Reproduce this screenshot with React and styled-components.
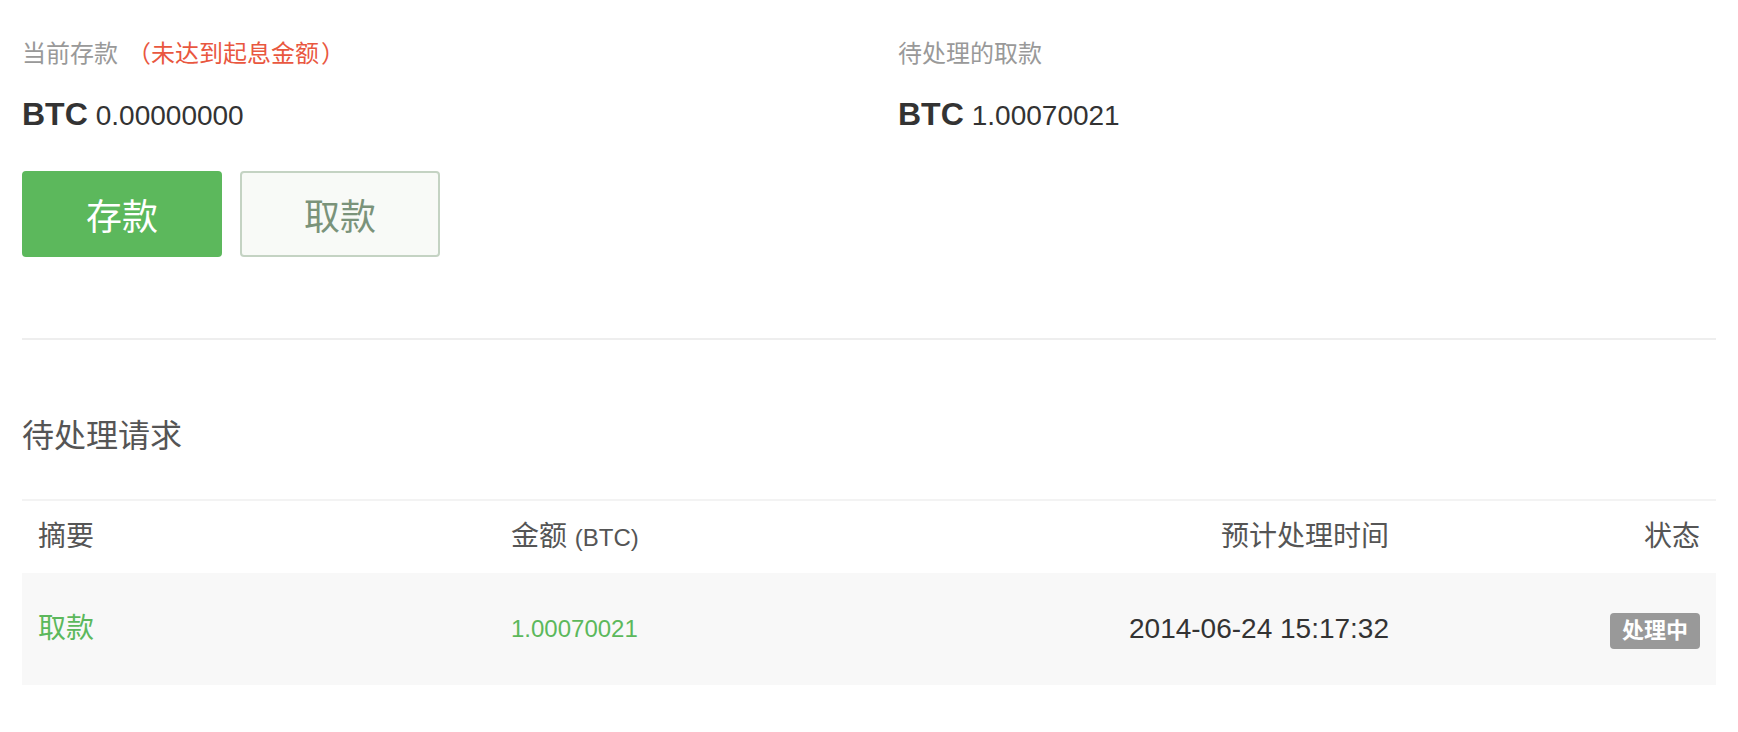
import React from "react";
import styled, { createGlobalStyle } from "styled-components";

const GlobalStyle = createGlobalStyle`
  html, body {
    margin: 0;
    padding: 0;
    background: #ffffff;
  }
  body {
    font-family: "Liberation Sans", Arial, "Noto Sans CJK SC", sans-serif;
    color: #333333;
  }
`;

const Page = styled.div`
  padding: 36px 22px 40px 22px;
`;

const Summary = styled.div`
  display: grid;
  grid-template-columns: 876px 1fr;
`;

const Balance = styled.div`
  display: flex;
  flex-direction: column;
`;

const Label = styled.div`
  height: 36px;
  font-size: 24px;
  line-height: 36px;
  color: #999999;
  white-space: nowrap;
`;

const Warn = styled.span`
  color: #e9573f;
  margin-left: 9px;
`;

const Paren = styled.span`
  padding-left: ${(p) => (p.$open ? "0" : "2px")};
`;

const Amount = styled.div`
  margin-top: 22px;
  height: 41px;
  font-size: 28px;
  line-height: 40px;
  color: #333333;
`;

const Currency = styled.strong`
  font-size: 32px;
  font-weight: bold;
  margin-right: 8px;
`;

const Actions = styled.div`
  display: flex;
  gap: 18px;
  margin-top: 36px;
`;

const ActionButton = styled.button`
  width: 200px;
  height: 86px;
  box-sizing: border-box;
  display: flex;
  align-items: center;
  justify-content: center;
  font-family: "Liberation Sans", Arial, "Noto Sans CJK SC", sans-serif;
  font-size: 36px;
  border-radius: 4px;
  border: 2px solid ${(p) => (p.$primary ? "#5cb85c" : "#c4d3c3")};
  background: ${(p) => (p.$primary ? "#5cb85c" : "#f8faf7")};
  color: ${(p) => (p.$primary ? "#ffffff" : "#7a937a")};
  cursor: pointer;
  padding: 0;
`;

const Divider = styled.hr`
  margin: 81px 0 0 0;
  border: 0;
  height: 2px;
  background: #eeeeee;
`;

const SectionTitle = styled.h3`
  margin: 72px 0 0 0;
  height: 48px;
  font-size: 32px;
  line-height: 48px;
  font-weight: normal;
  color: #555555;
`;

const Table = styled.div`
  margin-top: 39px;
  border-top: 2px solid #f3f3f3;
`;

const Row = styled.div`
  display: grid;
  grid-template-columns: 473px 1fr 1fr 311px;
  align-items: center;
  height: ${(p) => (p.$head ? "72px" : "112px")};
  background: ${(p) => (p.$head ? "transparent" : "#f8f8f8")};
`;

const Cell = styled.div`
  padding: 0 16px;
  font-size: ${(p) => p.$size || "28px"};
  line-height: 40px;
  text-align: ${(p) => (p.$right ? "right" : "left")};
  color: ${(p) => p.$color || "#333333"};
`;

const Unit = styled.small`
  font-size: 24px;
`;

const Badge = styled.span`
  display: inline-block;
  vertical-align: middle;
  padding: 7px 12px;
  font-size: 22px;
  line-height: 22px;
  font-weight: bold;
  color: #ffffff;
  background: #999999;
  border-radius: 4px;
`;

export default function App() {
  return (
    <>
      <GlobalStyle />
      <Page>
        <Summary>
          <Balance>
            <Label>
              当前存款
              <Warn>
                <Paren $open>（</Paren>未达到起息金额<Paren>）</Paren>
              </Warn>
            </Label>
            <Amount>
              <Currency>BTC</Currency>0.00000000
            </Amount>
            <Actions>
              <ActionButton $primary>存款</ActionButton>
              <ActionButton>取款</ActionButton>
            </Actions>
          </Balance>
          <Balance>
            <Label>待处理的取款</Label>
            <Amount>
              <Currency>BTC</Currency>1.00070021
            </Amount>
          </Balance>
        </Summary>

        <Divider />

        <SectionTitle>待处理请求</SectionTitle>

        <Table>
          <Row $head>
            <Cell $color="#555555">摘要</Cell>
            <Cell $color="#555555">
              金额 <Unit>(BTC)</Unit>
            </Cell>
            <Cell $right $color="#555555">预计处理时间</Cell>
            <Cell $right $color="#555555">状态</Cell>
          </Row>
          <Row>
            <Cell $color="#5cb85c">取款</Cell>
            <Cell $color="#5cb85c" $size="24px">1.00070021</Cell>
            <Cell $right>2014-06-24 15:17:32</Cell>
            <Cell $right>
              <Badge>处理中</Badge>
            </Cell>
          </Row>
        </Table>
      </Page>
    </>
  );
}
